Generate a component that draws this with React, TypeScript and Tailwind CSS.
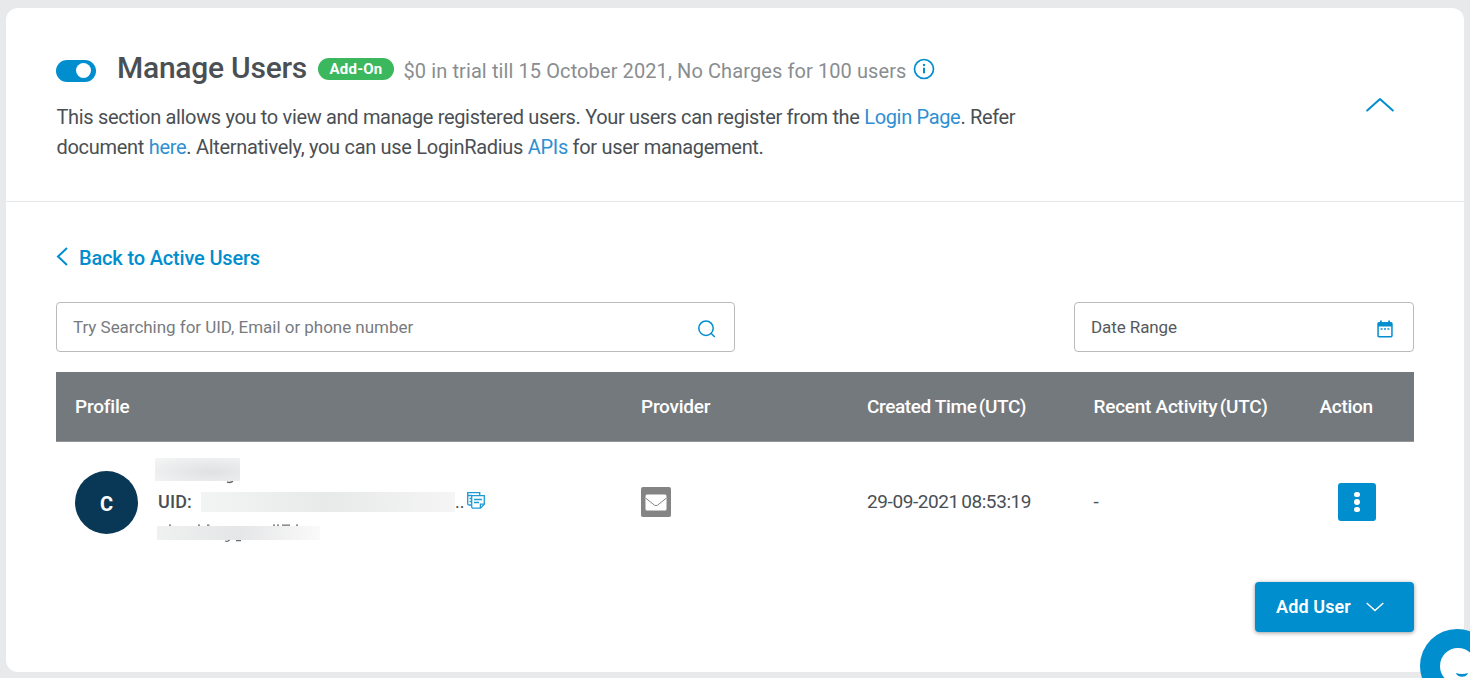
import { ReactNode } from "react";

const Link = ({ children }: { children: ReactNode }) => (
  <a href="#" className="text-[#2e8fd2]">{children}</a>
);

function Toggle() {
  return (
    <button aria-label="Enable" className="flex h-[22px] w-10 items-center justify-end rounded-full bg-[#008ecf] pr-[5px]">
      <span className="size-[15px] rounded-full bg-white" />
    </button>
  );
}

function InfoIcon() {
  return (
    <svg width="22" height="22" viewBox="0 0 22 22" fill="none" stroke="#008ecf" strokeWidth="1.7">
      <circle cx="11" cy="11" r="9.5" />
      <path d="M11 9.800v5.400" strokeWidth="2" />
      <circle cx="11" cy="7" r="1.2" fill="#008ecf" stroke="none" />
    </svg>
  );
}

function CopyIcon() {
  return (
    <svg width="18" height="17" viewBox="0 0 18 17" fill="none" stroke="#1c9ad6" strokeWidth="1.3">
      <path d="M4 13H2.200Q.7 13 .7 11.500V.7h12V3M.7 3.500h4M2.500 6.500h2M2.500 9.500h2" />
      <path d="M4.700 3.700h12.600v8.600l-3.800 3.900H6.200q-1.500 0-1.500-1.500z" />
      <path d="M17 12.200h-3.600v3.700M7 7.500h8M7 10.500h5" />
    </svg>
  );
}

function MailIcon() {
  return (
    <span className="flex size-[30px] items-center justify-center rounded-[2px] bg-[#848484]">
      <svg width="22" height="17" viewBox="0 0 22 17">
        <rect x="0.5" y="0.5" width="21" height="16" rx="1.5" fill="#fff" />
        <path d="M0.500 4l9 7.200q1.500 1 3 0L21.500 4" fill="none" stroke="#848484" strokeWidth="1" />
      </svg>
    </span>
  );
}

function Header() {
  return (
    <header className="flex h-[194px] items-start justify-between border-b border-[#e6e7e9] pr-[70.500px] pl-[50.500px]">
      <div>
        <div className="mt-[41px] flex h-10 items-center whitespace-nowrap">
          <div className="-ml-[0.500px] mt-[3px]"><Toggle /></div>
          <h1 className="-mt-0.5 ml-[21px] text-[30px] leading-10 font-medium tracking-[-0.25px]">Manage Users</h1>
          <span className="ml-[11px] flex h-[22px] w-[76px] items-center justify-center rounded-full bg-[#3bb75e] pt-px text-[15px] font-bold tracking-[0.2px] text-white">
            Add-On
          </span>
          <span className="mt-[3px] ml-[9.500px] text-xl tracking-[0.1px] text-[#8a8d90]">
            $0 in trial till 15 October 2021, No Charges for 100 users
          </span>
          <span className="ml-[6px]"><InfoIcon /></span>
        </div>
        <p className="mt-[13px] text-xl leading-[30px] whitespace-nowrap">
          <span className="tracking-[-0.333px]">
            This section allows you to view and manage registered users. Your users can register from the <Link>Login Page</Link>. Refer
          </span>
          <br />
          <span className="tracking-[-0.3px]">
            document <Link>here</Link>. Alternatively, you can use LoginRadius <Link>APIs</Link> for user management.
          </span>
        </p>
      </div>
      <svg className="mt-[89px]" width="28" height="15" viewBox="0 0 28 15" fill="none" stroke="#008ecf" strokeWidth="2" strokeLinecap="round" strokeLinejoin="round">
        <path d="M1.2 13.5L14 2l12.8 11.5" />
      </svg>
    </header>
  );
}

function Filters() {
  return (
    <div className="mt-[30px] flex justify-between text-[17px]">
      <div className="flex h-[50px] w-[679px] items-center justify-between rounded-[4px] border border-[#b9bbbd] pr-[18px] pl-4 text-[#777b7f]">
        <span className="pt-0.5 tracking-[-0.03px]">Try Searching for UID, Email or phone number</span>
        <svg className="mt-1" width="18" height="18" viewBox="0 0 18 18" fill="none" stroke="#008ecf" strokeWidth="1.5">
          <circle cx="8" cy="8.2" r="7.2" />
          <path d="M12.800 13l4 4" />
        </svg>
      </div>
      <div className="flex h-[50px] w-[340px] items-center justify-between rounded-[4px] border border-[#b9bbbd] pr-5 pl-4 text-[#55595d]">
        <span className="pt-0.5 tracking-[-0.09px]">Date Range</span>
        <svg className="mt-1" width="16" height="18" viewBox="0 0 16 18">
          <path d="M2 2h1V.5h1.8V2h6.4V.5H13V2h1a1.7 1.7 0 0 1 1.7 1.7v12A1.7 1.7 0 0 1 14 17.4H2A1.7 1.7 0 0 1 .3 15.700v-12A1.7 1.7 0 0 1 2 2zM1.800 6.500v9.400h12.400V6.500z" fill="#008ecf" fillRule="evenodd" />
          <path d="M3.600 8h2v2h-2zM7 8h2v2H7zM10.400 8h2v2h-2z" fill="#4bacdc" />
        </svg>
      </div>
    </div>
  );
}

const columns = "grid grid-cols-[566px_226px_226.500px_226px_1fr] items-center pl-[19px] whitespace-nowrap";

function UserTable() {
  return (
    <div className="mt-5">
      <div className={`${columns} h-[70px] border-b border-[#93979a] bg-[#74797d] pt-0.5 text-[19px] font-medium text-white`}>
        <span className="tracking-[-0.2px]">Profile</span>
        <span className="tracking-[-0.25px]">Provider</span>
        <span className="tracking-[-0.38px]">Created Time <span className="-ml-[2px]">(UTC)</span></span>
        <span className="tracking-[-0.25px]">Recent Activity <span className="-ml-[2px]">(UTC)</span></span>
        <span className="tracking-[-0.3px]">Action</span>
      </div>
      <div className={`${columns} h-[120px] text-[19px]`}>
        <div className="-mt-1.5 flex items-start">
          <span className="mt-[13px] flex size-[63px] items-center justify-center rounded-full bg-[#093857] pt-0.5 text-xl font-bold text-white">C</span>
          <div className="ml-[17px] flex flex-col">
            <span className="relative h-[23px] w-[85px] bg-[radial-gradient(ellipse_at_65%_60%,#e0e1e3,#f4f5f5)]">
              <svg className="absolute top-[23px] left-[71px]" width="8" height="3" fill="none" stroke="#5c6064" strokeWidth="1.500">
                <path d="M1 .8q3 1.500 6-.6" />
              </svg>
            </span>
            <div className="mt-[4px] flex h-[34px] items-center pl-[3px]">
              <span className="text-lg font-medium tracking-[0.15px]">UID:</span>
              <span className="ml-[9px] h-5 w-[254px] bg-linear-to-r from-[#f3f4f4] via-[#e8e9e9] to-[#f5f5f5]" />
              <span className="mr-[3px] text-lg tracking-[-0.1px]">..</span>
              <span className="-mt-1"><CopyIcon /></span>
            </div>
            <span className="relative mt-[7px] ml-[2px] h-[14px] w-[163px] bg-linear-to-r from-[#eff0f0] via-[#e5e6e7] to-[#fafafa]">
              <svg className="absolute -top-0.5 left-0" width="163" height="18" fill="none" stroke="#6a6e72" strokeWidth="1.300">
                <path d="M12 1.200h2M41 1.200h2M50 1.200h2.500M116 1.200h2M120 1.200h2M125 1.200h8M139 1.200h2" />
                <path d="M68 17q3 1 4.500-1.200M79 16.700h5" />
              </svg>
            </span>
          </div>
        </div>
        <MailIcon />
        <span className="tracking-[-0.41px]">29-09-2021 <span className="-ml-[2px]">08:53:19</span></span>
        <span>-</span>
        <button aria-label="More" className="ml-[18px] flex size-[38px] flex-col items-center justify-center gap-[2px] rounded-[3px] bg-[#008ecf] pl-px">
          <span className="size-[5.500px] rounded-full bg-white" />
          <span className="size-[5.500px] rounded-full bg-white" />
          <span className="size-[5.500px] rounded-full bg-white" />
        </button>
      </div>
    </div>
  );
}

function ChatBubble() {
  return (
    <div className="absolute top-[629px] left-[1420px] h-[49px] w-[50px] overflow-hidden">
      <svg width="74" height="74" viewBox="0 0 74 74">
        <circle cx="37" cy="37" r="37" fill="#008ecf" />
        <circle cx="38" cy="37" r="18" fill="#fff" />
        <path d="M36 44q6 1.800 12 0a6.200 5 0 0 1-12 0z" fill="#008ecf" />
      </svg>
    </div>
  );
}

export default function App() {
  return (
    <div className="relative h-[678px] w-[1470px] overflow-hidden bg-[#e8e9eb] pt-2 pr-1.5 pl-1.5 font-['Roboto',sans-serif] text-[#4a4f54]">
      <main className="h-[664px] rounded-[12px] bg-white">
        <Header />
        <section className="px-[50px] pt-[40px]">
          <a href="#" className="flex h-[30px] items-center text-xl font-medium tracking-[-0.17px] text-[#008ecf]">
            <svg className="-mt-0.5 mr-[11px]" width="12" height="19" viewBox="0 0 12 19" fill="none" stroke="currentColor" strokeWidth="2">
              <path d="M11 1L2 9.500l9 8.500" />
            </svg>
            <span className="pt-px">Back to Active Users</span>
          </a>
          <Filters />
          <UserTable />
          <div className="mt-5 flex justify-end">
            <button className="flex h-[50px] w-[159px] items-center rounded-[4px] bg-[#008ecf] pl-[21px] text-lg font-semibold tracking-[0.12px] text-white shadow-[0_1px_4px_rgba(0,0,0,0.4)]">
              <span>Add User</span>
              <svg className="ml-[15.500px]" width="18" height="10" viewBox="0 0 18 10" fill="none" stroke="currentColor" strokeWidth="1.500">
                <path d="M.7 1L9 8.500 17.300 1" />
              </svg>
            </button>
          </div>
        </section>
      </main>
      <ChatBubble />
    </div>
  );
}
